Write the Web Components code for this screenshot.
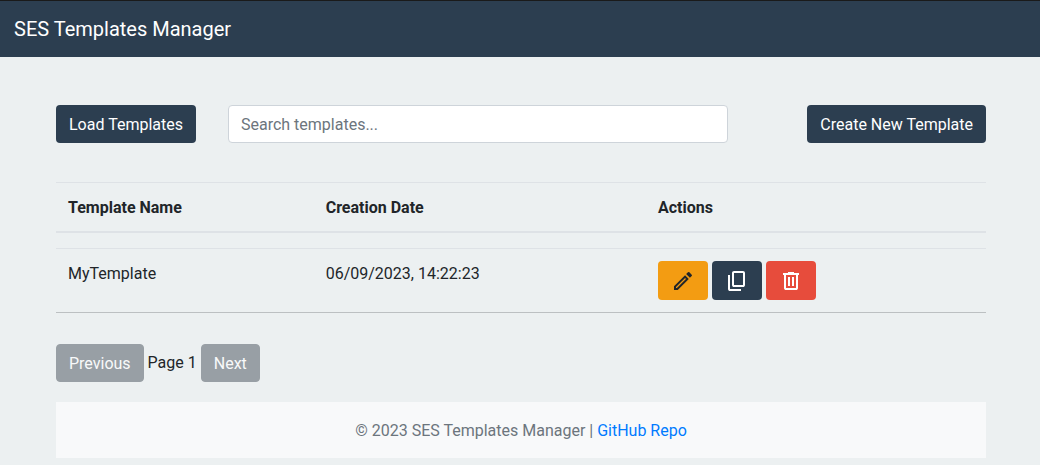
<!DOCTYPE html>
<html lang="en"><head><meta charset="utf-8"><title>SES Templates Manager</title>
<style>
html,body{margin:0;padding:0;background:#ecf0f1;font:16px/24px Roboto,sans-serif;color:#212529}
body{height:465px;overflow:hidden}
</style></head><body>
<ses-app></ses-app>
<template id="t-btn"><style>
:host{display:inline-block;flex:none}
button{display:block;box-sizing:border-box;height:38px;padding:7px 12px 5px;border:1px solid transparent;border-radius:4px;font:16px/24px Roboto,sans-serif;color:#fff;background:var(--bg,#2c3e50);cursor:pointer}
:host([variant=warning]) button{background:#f39c12;color:#212529}
:host([variant=danger]) button{background:#e74c3c}
:host([variant=muted]) button{background:#6c757d;opacity:.65;border-color:#6c757d}
:host([icon]) button{width:50px;height:39px;padding:1px 0 0;display:flex;align-items:center;justify-content:center}
</style><button part="b"><slot></slot></button></template>
<script>
function tpl(id){return document.getElementById(id).content.cloneNode(true)}
class SesButton extends HTMLElement{constructor(){super();this.attachShadow({mode:'open'}).appendChild(tpl('t-btn'))}}
customElements.define('ses-button',SesButton);

class SesHeader extends HTMLElement{constructor(){super();this.attachShadow({mode:'open'}).innerHTML=`<style>
:host{display:flex;align-items:center;box-sizing:border-box;height:57px;padding:0 14px;background:#2c3e50;border-top:1px solid #1a1a1a;color:#fff;font:20px/30px Roboto,sans-serif}
</style><slot></slot>`}}
customElements.define('ses-header',SesHeader);

class SesToolbar extends HTMLElement{constructor(){super();this.attachShadow({mode:'open'}).innerHTML=`<style>
:host{display:flex;align-items:flex-start;justify-content:space-between}
input{box-sizing:border-box;width:500px;height:38px;margin-left:32px;padding:6px 12px;border:1px solid #ced4da;border-radius:4px;background:#fff;font:16px/24px Roboto,sans-serif;color:#495057;outline:none}
input::placeholder{color:#6c757d;opacity:1}
.l{display:flex}
</style><div class="l"><slot name="load"></slot><input type="text" placeholder="Search templates..."></div><slot name="create"></slot>`}}
customElements.define('ses-toolbar',SesToolbar);

class SesTable extends HTMLElement{constructor(){super();this.attachShadow({mode:'open'}).innerHTML=`<style>
:host{display:block;font-size:16px}
.row{display:grid;grid-template-columns:257.7px 332.3px 340px}
.c{padding:13px 12px 11px}
.head{border-top:1px solid #dee2e6;border-bottom:2px solid #dee2e6;font-weight:700;height:48px;margin-bottom:15px}
.body{border-top:1px solid #dee2e6;border-bottom:1px solid #bcc0c2;height:63px}
.actions{display:flex;gap:4px;padding:12px}
svg{display:block}
</style>
<div class="row head"><div class="c">Template Name</div><div class="c">Creation Date</div><div class="c">Actions</div></div>
<div class="row body"><div class="c">MyTemplate</div><div class="c">06/09/2023, 14:22:23</div><div class="c actions">
<ses-button variant="warning" icon aria-label="Edit"><svg width="24" height="24" viewBox="0 0 24 24" fill="#212529"><path d="M3 17.25V21h3.75L17.81 9.94l-3.75-3.75L3 17.25zM5.92 19H5v-.92l9.06-9.06.92.92L5.92 19zM20.71 7.04a1 1 0 0 0 0-1.41l-2.34-2.34a1 1 0 0 0-1.41 0l-1.83 1.83 3.75 3.75 1.83-1.83z"/></svg></ses-button>
<ses-button icon aria-label="Copy"><svg width="24" height="24" viewBox="0 0 24 24" fill="#fff"><path fill-rule="evenodd" d="M9 18q-.825 0-1.412-.587T7 16V4q0-.825.588-1.412T9 2h9q.825 0 1.413.588T20 4v12q0 .825-.587 1.413T18 18H9Zm0-2h9V4H9v12Z"/><path d="M5 22q-.825 0-1.412-.587T3 20V6h2v14h11v2H5Z"/></svg></ses-button>
<ses-button variant="danger" icon aria-label="Delete"><svg width="24" height="24" viewBox="0 0 24 24" fill="#fff"><path d="M7 21q-.825 0-1.412-.587T5 19V6H4V4h5V3h6v1h5v2h-1v13q0 .825-.587 1.413T17 21H7ZM17 6H7v13h10V6ZM9 17h2V8H9v9Zm4 0h2V8h-2v9Z"/></svg></ses-button>
</div></div>`}}
customElements.define('ses-table',SesTable);

class SesPager extends HTMLElement{constructor(){super();this.attachShadow({mode:'open'}).innerHTML=`<style>
:host{display:flex;align-items:flex-start;gap:4px}
span{display:block;line-height:38px}
</style><ses-button variant="muted">Previous</ses-button><span>Page 1</span><ses-button variant="muted">Next</ses-button>`}}
customElements.define('ses-pager',SesPager);

class SesFooter extends HTMLElement{constructor(){super();this.attachShadow({mode:'open'}).innerHTML=`<style>
:host{display:block;box-sizing:border-box;height:56px;padding:17px 16px 15px;line-height:24px;background:#f8f9fa;color:#6c757d;text-align:center}
a{color:#007bff;text-decoration:none}
</style>© 2023 SES Templates Manager | <a href="#">GitHub Repo</a>`}}
customElements.define('ses-footer',SesFooter);

class SesApp extends HTMLElement{constructor(){super();this.attachShadow({mode:'open'}).innerHTML=`<style>
:host{display:block}
main{width:930px;margin:0 0 0 56px;padding-top:48px}
ses-table{margin-top:39px}
ses-pager{margin-top:31px}
ses-footer{margin-top:20px}
</style><ses-header>SES Templates Manager</ses-header>
<main><ses-toolbar><ses-button slot="load">Load Templates</ses-button><ses-button slot="create">Create New Template</ses-button></ses-toolbar>
<ses-table></ses-table><ses-pager></ses-pager><ses-footer></ses-footer></main>`}}
customElements.define('ses-app',SesApp);
</script></body></html>
